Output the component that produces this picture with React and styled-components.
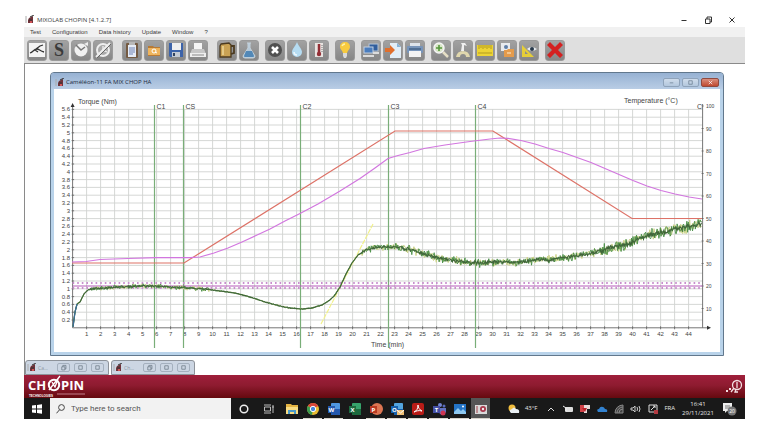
import React from "react"
import styled, { createGlobalStyle } from "styled-components"

const GlobalStyle = createGlobalStyle`
    * { box-sizing: border-box; }
    body {
        margin: 0;
        background: #fff;
        font-family: "Open Sans", "Noto Sans", sans-serif;
        color: #3c3c3c;
    }
    button, input { font: inherit; color: inherit; }
    button { border: 0; padding: 0; background: none; }
    svg { display: block; }
`;

const Screen = styled.main`
    display: flex;
    flex-direction: column;
    padding: 10px 15px 22px 24px;
`;

const TitleBar = styled.header`
    display: flex;
    align-items: center;
    justify-content: space-between;
    height: 17px;
    padding: 2px 8px 0 1px;
`;

const AppTitle = styled.h1`
    display: flex;
    align-items: center;
    gap: 2px;
    margin: 0;
    font-size: 6px;
    line-height: 10px;
    font-weight: 400;
    white-space: nowrap;
`;

const WindowControls = styled.div`
    display: flex;
    gap: 14px;
    color: #333;
`;

const MenuBar = styled.nav`
    display: flex;
    align-items: center;
    gap: 11px;
    height: 10px;
    padding-left: 6px;
    background: #f1f1f1;
    font-family: "Liberation Sans", Arial, sans-serif;
    font-size: 6px;
    line-height: 8px;
`;

const Toolbar = styled.div`
    display: flex;
    align-items: center;
    gap: 6px;
    height: 26px;
    padding-left: 3px;
    background: #dfdfdf;
`;

const ToolGroup = styled.div`
    display: flex;
    gap: 2px;
    margin-right: ${(p) => (p.$wide ? "3px" : "0")};
`;

const ToolButton = styled.button`
    display: grid;
    place-items: center;
    width: 20px;
    height: 21px;
    border: 1px solid #9a9a9a;
    border-radius: 3px;
    background: linear-gradient(#a2a2a2, #868686);
`;

const Desktop = styled.section`
    border: solid #8a8a8a;
    border-width: 1px 0 0 1px;
    padding: 8px 21px 0 25px;
`;

const ChildWindow = styled.article`
    border: 1px solid #62788d;
    border-radius: 4px 4px 0 0;
    padding: 0 3px 3px;
    background: #b9d3ea;
`;

const ChildTitleBar = styled.header`
    display: flex;
    align-items: center;
    justify-content: space-between;
    height: 16px;
    margin: 0 -3px;
    padding: 2px 4px 0 4px;
    border-radius: 3px 3px 0 0;
    background: linear-gradient(#97b2d3, #b9cde5);
`;

const ChildTitle = styled.h2`
    display: flex;
    align-items: center;
    gap: 1px;
    margin: 0;
    font-size: 6px;
    line-height: 10px;
    font-weight: 400;
    color: #1d2b3c;
`;

const ChildControls = styled.div`
    display: flex;
    gap: 2px;
`;

const ChildControl = styled.button`
    display: grid;
    place-items: center;
    width: ${(p) => (p.$danger ? "18px" : "17px")};
    height: 9px;
    border: 1px solid ${(p) => (p.$danger ? "#8f4a40" : "#8fa3ba")};
    border-radius: 2px;
    color: ${(p) => (p.$danger ? "#fff" : "#66788c")};
    background: ${(p) => (p.$danger ? "linear-gradient(#d98e7e, #c04a30)" : "linear-gradient(#cfdceb, #b3c7dd)")};
`;

const ChartArea = styled.div`
    background: #fff;
    svg { width: 100%; height: auto; }
`;

const MinimizedRow = styled.div`
    display: flex;
    gap: 2px;
    margin: 4px 0 0 -25px;
`;

const MinimizedWindow = styled.div`
    display: flex;
    align-items: center;
    gap: 4px;
    width: 84px;
    height: 15px;
    padding: 0 4px 0 1px;
    border: 1px solid #8d9299;
    border-radius: 3px 3px 0 0;
    background: #ccd6e3;
    font-size: 5px;
    line-height: 8px;
    color: #8c96a3;
`;

const MinimizedTitle = styled.span`
    display: flex;
    align-items: center;
    gap: 1px;
    flex: 1;
`;

const MinimizedControl = styled.button`
    display: grid;
    place-items: center;
    flex: none;
    width: 13px;
    height: 9px;
    border: 1px solid #a4b0be;
    border-radius: 2px;
    color: #66727f;
`;

const BrandBar = styled.section`
    display: flex;
    align-items: center;
    justify-content: space-between;
    height: 23px;
    padding: 0 2px 0 4px;
    background: linear-gradient(#9f1f3b, #8e1b30 45%, #65090f);
`;

const TaskBar = styled.footer`
    display: flex;
    align-items: stretch;
    height: 21px;
    background: #191919;
    color: #e6e6e6;
`;

const StartButton = styled.button`
    display: grid;
    place-items: center;
    width: 26px;
`;

const SearchBox = styled.label`
    display: flex;
    align-items: center;
    gap: 6px;
    width: 181px;
    padding-left: 6px;
    background: #f2f2f2;
    color: #444;
`;

const SearchInput = styled.input`
    min-width: 0;
    flex: 1;
    border: 0;
    padding: 0;
    outline: 0;
    background: transparent;
    font-family: Roboto, "Open Sans", sans-serif;
    font-size: 8px;
    line-height: 12px;
    &::placeholder { color: #555; opacity: 1; }
`;

const PinnedApps = styled.div`
    display: flex;
`;

const TaskButton = styled.button`
    display: grid;
    place-items: center;
    width: ${(p) => (p.$wide ? "25px" : "21px")};
    background: ${(p) => (p.$active ? "#555" : "transparent")};
    box-shadow: ${(p) => (p.$open ? "inset 0 -1px #d9d5cc" : "none")};
    border: solid transparent;
    border-width: 0 1px;
    background-clip: padding-box;
`;

const Tray = styled.div`
    display: flex;
    align-items: center;
    gap: 5px;
    margin-left: auto;
    padding-right: 8px;
    font-size: 6px;
    line-height: 9px;
`;

const TrayButton = styled.button`
    display: grid;
    place-items: center;
    width: 12px;
    height: 18px;
`;

const Weather = styled.button`
    display: flex;
    align-items: center;
    gap: 5px;
    margin-right: 3px;
`;

const Clock = styled.time`
    width: 36px;
    text-align: center;
`;

const NotifyButton = styled(TrayButton)`
    width: 16px;
`;

const AppGlyph = () => (
    <svg width="10" height="9" viewBox="0 0 10 9" aria-hidden="true">
        <path d="M1 1v7" stroke="#aaa" />
        <path d="M4 3l4-2v7H3V5z" fill="#70333a" />
        <path d="M5 2l4-2M4 5h3" stroke="#333" />
        <path d="M5 6h2v2H5z" fill="#d35557" />
    </svg>
);

// 計器ツールバーの絵。すべて18x18
const toolIcons = {
    curve: (
        <>
            <rect x="1" y="2" width="16" height="14" fill="#f4f4f4" />
            <path d="M2 12c3-1 4-4 7-4 2 0 3 2 7 3M8 8l4-3 3-1M7 9l3 2" fill="none" stroke="#333" strokeWidth="1.3" />
        </>
    ),
    standard: (
        <text x="9" y="15" textAnchor="middle" fontSize="18" fontWeight="700" fontFamily="Liberation Serif, serif" fill="#3b3b3b">S</text>
    ),
    clock: (
        <>
            <circle cx="9" cy="9" r="6.5" fill="#f0f0f0" />
            <path d="M4 4l5 5 4-3" fill="none" stroke="#777" strokeWidth="1.5" />
            <path d="M12 3l4-2v4z" fill="#eee" />
        </>
    ),
    clockOff: (
        <>
            <circle cx="9" cy="9" r="6" fill="#aaa" stroke="#eee" strokeWidth="2" />
            <path d="M9 5v4l4 2" fill="none" stroke="#eee" strokeWidth="1.3" />
            <path d="M2 16L16 2" stroke="#eee" strokeWidth="2" />
            <path d="M3 17L17 3" stroke="#666" />
        </>
    ),
    clipboard: (
        <>
            <rect x="3" y="2" width="12" height="15" rx="1" fill="#755b43" />
            <rect x="5" y="4" width="8" height="12" fill="#e6ecf6" />
            <rect x="6" y="1" width="6" height="3" fill="#b8b8b8" />
            <path d="M6 7h6M6 9h6M6 11h6M6 13h4" stroke="#7184b5" />
        </>
    ),
    folder: (
        <>
            <path d="M3 5h5l1 1h6v9H3z" fill="#b87a35" />
            <path d="M3 7h12v7H3z" fill="#efb45c" />
            <circle cx="9" cy="10" r="2" fill="none" stroke="#fff" />
            <path d="M10 11l2 1" stroke="#fff" />
        </>
    ),
    save: (
        <>
            <path d="M2 2h14v14H3l-1-1z" fill="#3c63a9" />
            <rect x="5" y="2" width="9" height="7" fill="#eee" />
            <rect x="5" y="11" width="8" height="5" fill="#c4cad3" />
            <path d="M6 12h2v3H6z" fill="#33435e" />
        </>
    ),
    print: (
        <>
            <path d="M5 2h8v7H5z" fill="#f5f5f5" />
            <path d="M3 8h12l2 5H1z" fill="#c7c7c7" />
            <path d="M1 12h16v4H1z" fill="#eee" />
            <path d="M3 14h12" stroke="#888" />
        </>
    ),
    jug: (
        <>
            <path d="M3 3l8-1 2 2v12H2V5z" fill="#c9a254" stroke="#4c3b21" strokeWidth="1.3" />
            <path d="M13 5h3v7l-3 1" fill="none" stroke="#4c3b21" strokeWidth="1.8" />
            <path d="M5 5v9" stroke="#e4c987" strokeWidth="2" />
        </>
    ),
    flask: (
        <>
            <path d="M7 2h4M8 2v5l-5 8q0 2 2 2h8q2 0 2-2l-5-8V2" fill="#b4c8d8" stroke="#c4d2dc" />
            <path d="M6 10h6l2 5q0 1-1 1H5q-1 0-1-1z" fill="#5288b7" />
        </>
    ),
    stop: (
        <>
            <circle cx="9" cy="9" r="7" fill="#505050" />
            <path d="M6 6l6 6M12 6l-6 6" stroke="#fff" strokeWidth="2.6" />
        </>
    ),
    drop: (
        <>
            <path d="M9 1c2 5 5 7 5 10a5 5 0 01-10 0c0-3 3-5 5-10z" fill="#b5dcf2" />
            <path d="M6 11q0 3 3 3" fill="none" stroke="#eef8fd" strokeWidth="1.5" />
        </>
    ),
    thermometer: (
        <>
            <rect x="5" y="2" width="8" height="14" fill="#e9e4e1" />
            <path d="M9 3v9" stroke="#942e35" strokeWidth="2.5" />
            <circle cx="9" cy="13" r="2.2" fill="#942e35" />
            <path d="M12 4v8" stroke="#777" strokeDasharray="1 1" />
        </>
    ),
    bulb: (
        <>
            <path d="M9 1c3 0 5 2 5 5 0 2-2 3-3 6H7C6 9 4 8 4 6c0-3 2-5 5-5z" fill="#f7ca3f" />
            <path d="M6 5q1-2 3-2" fill="none" stroke="#fff2a4" strokeWidth="1.5" />
            <path d="M7 12h4v3l-1 2H8l-1-2z" fill="#d9d9d9" />
        </>
    ),
    computers: (
        <>
            <rect x="7" y="3" width="9" height="7" fill="#315e9d" stroke="#b5c4d5" />
            <rect x="2" y="6" width="9" height="6" fill="#4a7dbe" stroke="#c3d0df" />
            <path d="M1 15h11M11 12h6" stroke="#dcdcdc" strokeWidth="2" />
        </>
    ),
    exportPage: (
        <>
            <path d="M6 2h7l4 4v11H6z" fill="#e1edf7" />
            <path d="M13 2v4h4" fill="#87b4da" />
            <path d="M1 7h5V4l5 5-5 5v-3H1z" fill="#e06f2c" />
        </>
    ),
    report: (
        <>
            <rect x="4" y="2" width="10" height="4" fill="#dde3ea" />
            <rect x="1" y="5" width="16" height="7" rx="1" fill="#7895ba" />
            <path d="M3 10h12v6H3z" fill="#f3f3f3" />
            <path d="M3 8h12" stroke="#28486c" />
        </>
    ),
    zoom: (
        <>
            <path d="M11 11l5 5" stroke="#e5dec5" strokeWidth="2.5" />
            <circle cx="7" cy="7" r="5" fill="#d9e6c8" stroke="#f5f5f5" strokeWidth="1.5" />
            <path d="M7 4v6M4 7h6" stroke="#57983d" strokeWidth="1.6" />
        </>
    ),
    torque: (
        <>
            <path d="M7 2h4l2 3-3-1v6H7l1-6z" fill="#f0f0f0" />
            <path d="M2 16q1-6 7-6t7 6z" fill="#e0d7ad" />
            <path d="M6 16q0-3 3-3t3 3" fill="#8b8b8b" />
        </>
    ),
    ruler: (
        <>
            <rect x="1" y="4" width="16" height="11" fill="#edd435" />
            <path d="M3 4v4M5 4v3M7 4v4M9 4v3M11 4v4M13 4v3M15 4v4M2 12h14" stroke="#b39b20" />
        </>
    ),
    copyFolder: (
        <>
            <rect x="3" y="2" width="9" height="8" fill="#e7eaee" />
            <circle cx="8" cy="6" r="2" fill="#5e7ea7" />
            <path d="M6 9h3l1-1h6v8H6z" fill="#e49b4b" />
            <path d="M9 12h4" stroke="#fff0d5" />
        </>
    ),
    measure: (
        <>
            <path d="M2 4v12h12z" fill="#e5ce38" />
            <path d="M5 10v3h3z" fill="#8d8d8d" />
            <path d="M7 8q4-4 10 0-5 4-10 0z" fill="#e9edf1" />
            <circle cx="12" cy="8" r="2" fill="#27384a" />
        </>
    ),
    quit: <path d="M4 1l5 5 5-5 3 3-5 5 5 5-3 3-5-5-5 5-3-3 5-5-5-5z" fill="#d42020" />,
};

const toolGroups = [
    { wide: true, tools: ["curve", "standard", "clock", "clockOff"] },
    { wide: true, tools: ["clipboard", "folder", "save", "print"] },
    { tools: ["jug", "flask"] },
    { tools: ["stop", "drop", "thermometer"] },
    { tools: ["bulb"] },
    { tools: ["computers", "exportPage", "report"] },
    { tools: ["zoom", "torque", "ruler", "copyFolder", "measure"] },
    { tools: ["quit"] },
];

const menus = ["Test", "Configuration", "Data history", "Update", "Window", "?"];

const LEFT = 72.6;
const RIGHT = 702.6;
const BOTTOM = 327.8;
const xOf = (min) => LEFT + min * 14;
const yOf = (nm) => BOTTOM - nm * 39;

const torque = [
    [73, 327], [75, 312], [77, 304], [80, 302], [84, 294], [88, 290], [95, 288.5], [110, 287.7], [128, 286.6],
    [140, 286], [155, 286], [170, 287], [190, 288], [205, 289], [220, 291], [235, 293], [250, 297], [265, 302],
    [280, 306], [290, 308], [302, 309], [312, 308], [322, 305], [330, 300], [335, 295], [340, 287], [346, 274],
    [352, 263], [358, 255], [366, 250], [375, 247.5], [388, 247], [400, 247.5], [412, 250], [424, 254], [438, 258],
    [455, 261], [470, 262.5], [480, 263], [500, 262], [521, 262], [535, 260], [549, 260], [563, 257.5], [577, 256],
    [591, 253.5], [605, 249], [619, 246], [633, 242], [645, 236], [661, 232], [675, 229], [690, 226.5], [702, 224],
];
const doughTemp = [
    [72, 262], [86, 261.5], [100, 259.5], [128, 258.5], [156, 257.7], [190, 257.7], [200, 257], [214, 253], [228, 248],
    [242, 242], [256, 235.5], [270, 229], [285, 221], [300, 213.5], [318, 204], [340, 191], [360, 178.5], [375, 168],
    [388, 158.5], [398, 155.5], [410, 152.5], [424, 148.5], [445, 145], [470, 141.5], [490, 139], [500, 138],
    [508, 138.3], [521, 140.5], [535, 144], [549, 148.5], [563, 152.5], [577, 157.5], [591, 162.5], [605, 168.5],
    [619, 174.5], [633, 180.5], [647, 186], [661, 190.5], [675, 194], [689, 197], [702, 199],
];
const setTemp = [[72, 263], [184, 263], [395, 131], [493, 131], [632, 218.5], [702, 218.5]];
const toPoints = (list) => list.map((p) => p.join(",")).join(" ");

function noiseAt(x) { //トルク波形の振れ幅
    if (x < 90) return 0.6;
    if (x < 210) return 2.2;
    if (x < 362) return 0.7;
    if (x < 400) return 3.4;
    if (x < 600) return 4.2;
    return 6;
}

function makeTrace(seed, scale) {
    const out = [];
    let s = seed;
    let k = 0;
    for (let x = 73; x <= 702; x += 0.7) {
        while (k < torque.length - 2 && torque[k + 1][0] < x) k++;
        const [x0, y0] = torque[k];
        const [x1, y1] = torque[k + 1];
        s = (s * 16807) % 2147483647;
        const a = s / 2147483647;
        s = (s * 16807) % 2147483647;
        const r = a + s / 2147483647 - 1;
        const y = y0 + ((y1 - y0) * (x - x0)) / (x1 - x0) + r * noiseAt(x) * scale;
        out.push([x.toFixed(1), y.toFixed(1)]);
    }
    return toPoints(out);
}

const yellowTrace = makeTrace(901, 1.2);
const greenTrace = makeTrace(77, 1.2);
const darkTrace = makeTrace(4321, 0.5);

const markers = [[154.5, "C1"], [183.5, "CS"], [300.5, "C2"], [388.5, "C3"], [475.5, "C4"]];

function Chart() {
    const minutes = Array.from({ length: 44 }, (_, i) => i + 1);
    const torqueTicks = Array.from({ length: 28 }, (_, i) => (i + 1) / 5);
    const tempTicks = Array.from({ length: 10 }, (_, i) => (i + 1) * 10);
    return (
        <svg viewBox="54 89 666 263" fontFamily="Liberation Sans, Arial, sans-serif" fontSize="6" fill="#444" role="img" aria-label="Torque and temperature over time">
            <g stroke="#d0d2d0" strokeWidth="0.9" fill="none">
                {minutes.map((m) => <path key={m} d={`M${xOf(m)} 109V${BOTTOM}`} />)}
                {torqueTicks.map((t) => <path key={t} d={`M${LEFT} ${yOf(t)}H${RIGHT}`} />)}
            </g>
            <g stroke="#666" strokeWidth="0.9" fill="none">
                <path d={`M${LEFT} 106V${BOTTOM}H708M${RIGHT} 104V${BOTTOM}`} />
                {minutes.map((m) => <path key={m} d={`M${xOf(m)} ${BOTTOM - 1.5}v3`} />)}
                {torqueTicks.map((t) => <path key={t} d={`M${LEFT - 1} ${yOf(t)}h2.5`} />)}
                {tempTicks.map((t) => <path key={t} d={`M${RIGHT - 1} ${331 - t * 2.25}h2`} />)}
            </g>
            <path d="M72.6 103l-2 4h4zM711 327.8l-4-2v4z" fill="#333" />
            <g textAnchor="end">
                {torqueTicks.map((t) => <text key={t} x="70" y={yOf(t) + 2}>{t}</text>)}
            </g>
            <g textAnchor="middle">
                {minutes.map((m) => <text key={m} x={xOf(m)} y="336">{m}</text>)}
            </g>
            {tempTicks.map((t) => <text key={t} x="706" y={333 - t * 2.25} fontSize="5">{t}</text>)}
            <g fontSize="7">
                <text x="78" y="104">Torque (Nm)</text>
                <text x="624" y="103">Temperature (°C)</text>
                <text x="371" y="347">Time (min)</text>
                {markers.map(([x, name]) => <text key={name} x={x + 2} y="109">{name}</text>)}
                <text x="697" y="109">C</text>
            </g>
            <g stroke="#79ae78" strokeWidth="1.2">
                {markers.map(([x, name]) => <path key={name} d={`M${x} 105V348`} />)}
            </g>
            <g fill="none">
                <path d={`M${LEFT} 286H${RIGHT}`} stroke="#b65fb9" strokeWidth="1.2" />
                <path d={`M${LEFT} 283H${RIGHT}M${LEFT} 288H${RIGHT}`} stroke="#c88ecd" strokeWidth="2" strokeDasharray="1.6 3" />
                <path d="M321 324L373 224" stroke="#f1f18a" strokeWidth="1.2" strokeDasharray="5 1" />
                <polyline points={toPoints(setTemp)} stroke="#dd7267" strokeWidth="1.2" />
                <polyline points={toPoints(doughTemp)} stroke="#d276df" strokeWidth="1.2" />
                <polyline points={yellowTrace} stroke="#cdd48a" strokeWidth="1" />
                <polyline points={greenTrace} stroke="#4a8f45" strokeWidth="0.9" />
                <polyline points={darkTrace} stroke="#41663a" strokeWidth="1.1" />
                <path d="M73 327l2-15 2-8" stroke="#3d6d98" strokeWidth="1.3" />
            </g>
        </svg>
    );
}

const Glyph = ({ kind, size = 10 }) => (
    <svg width={size} height={size} viewBox="0 0 10 10" fill="none" stroke="currentColor" aria-hidden="true">
        {kind === "minimize" && <path d="M2.5 5.5h5" />}
        {kind === "restore" && <path d="M2.5 4h4.5v4.5H2.5zM4 4V2h4.5v5H7" />}
        {kind === "maximize" && <path d="M2.5 2.5h5v5h-5z" />}
        {kind === "close" && <path d="M2.5 2.5l5 5M7.5 2.5l-5 5" />}
    </svg>
);

const office = (letter, color, light) => (
    <>
        <rect x="4" y="1" width="9" height="12" rx="1" fill={light} />
        <path d="M4 7h9v5q0 1-1 1H4z" fill={color} />
        <rect x="1" y="4" width="7" height="7" fill={color} />
        <text x="4.5" y="10" textAnchor="middle" fontSize="6" fontWeight="700" fill="#fff">{letter}</text>
    </>
);

const taskApps = [
    { name: "Cortana", wide: true, art: <circle cx="7" cy="7" r="3.8" fill="none" stroke="#eee" strokeWidth="1.5" /> },
    { name: "Task view", wide: true, art: <path d="M2 3h7M2 11h7M2.5 5h6v4h-6zM11 3v8M10 5h2" fill="none" stroke="#bbb" /> },
    { name: "File Explorer", art: (
        <>
            <path d="M1 2h5l1 1h6v9H1z" fill="#e4b342" />
            <path d="M1 5h12v7H1z" fill="#f9dd83" />
            <path d="M3 8h8v4H9v-2H5v2H3z" fill="#4b9ac8" />
        </>
    ) },
    { name: "Chrome", open: true, art: (
        <>
            <circle cx="7" cy="7" r="6" fill="#e9bd33" />
            <path d="M7 7L1.8 4a6 6 0 0110.4 0z" fill="#d9463b" />
            <path d="M7 7L1.8 4A6 6 0 006 13z" fill="#3c9b50" />
            <circle cx="7" cy="7" r="2.7" fill="#4a87da" stroke="#fff" />
        </>
    ) },
    { name: "Word", open: true, art: office("W", "#2459ad", "#4f97e0") },
    { name: "Excel", art: office("X", "#1d6a3f", "#36a36b") },
    { name: "PowerPoint", open: true, art: (
        <>
            <circle cx="8" cy="7" r="6" fill="#dc7552" />
            <rect x="1" y="4" width="7" height="7" fill="#b83a22" />
            <text x="4.5" y="10" textAnchor="middle" fontSize="6" fontWeight="700" fill="#fff">P</text>
        </>
    ) },
    { name: "Outlook", open: true, art: (
        <>
            {office("O", "#1761ac", "#53a5df")}
            <path d="M7 8h7v5H7z" fill="#f0c177" />
            <path d="M7 8l3.5 3L14 8" fill="none" stroke="#fff" />
        </>
    ) },
    { name: "Acrobat", open: true, art: (
        <>
            <rect x="1" y="1" width="12" height="12" rx="2" fill="#b91c17" />
            <path d="M3 10c3-1 4-4 4-7 0 3 2 5 4 6-3-1-6 0-8 1z" fill="none" stroke="#fff" />
        </>
    ) },
    { name: "Teams", open: true, art: (
        <>
            <circle cx="8" cy="3" r="2" fill="#7483d1" />
            <circle cx="12" cy="4" r="1.5" fill="#596bbb" />
            <path d="M5 6h9v4q-2 4-6 2z" fill="#6372c1" />
            <rect x="1" y="4" width="7" height="7" fill="#454fa3" />
            <text x="4.5" y="10" textAnchor="middle" fontSize="6" fontWeight="700" fill="#fff">T</text>
            <circle cx="11" cy="11" r="2.5" fill="#cf3551" />
        </>
    ) },
    { name: "Photos", open: true, art: (
        <>
            <rect x="1" y="2" width="12" height="10" fill="#2474c6" />
            <path d="M1 10l4-4 3 3 2-2 3 3v2H1z" fill="#8fc9f0" />
            <circle cx="10" cy="4.5" r="1" fill="#fff" />
        </>
    ) },
    { name: "Mixolab", active: true, open: true, art: (
        <>
            <rect x="1" y="3" width="12" height="9" fill="#d9d9d9" />
            <path d="M3 4v7" stroke="#a1434a" />
            <circle cx="9" cy="7" r="3" fill="#a9384b" />
            <circle cx="9" cy="7" r="1.2" fill="#eee" />
        </>
    ) },
];

const trayIcons = [
    { name: "Show hidden icons", art: <path d="M3 8l3-3 3 3" fill="none" stroke="#ddd" /> },
    { name: "Battery", art: <><rect x="3" y="4" width="8" height="5" rx="1" fill="#ddd" /><path d="M1 3l3 2v3" fill="none" stroke="#eee" /></> },
    { name: "Security", art: <><path d="M1 2h5v7H1z" fill="#d24248" /><path d="M5 2h6v4H8v4H5z" fill="#e9dada" /><path d="M3 5h5l-2 4z" fill="#b92229" /></> },
    { name: "OneDrive", art: <path d="M2 9q-2-3 1-3 1-3 4-2 1 0 2 2 3 0 2 3z" fill="#3282d0" /> },
    { name: "Network", art: <path d="M2 10A8 8 0 0110 2v8zM4 10A6 6 0 0110 4M6 10a4 4 0 014-4" fill="#444" stroke="#888" /> },
    { name: "Volume", art: <path d="M1 5h2l2-2v6L3 7H1zM7 4q1 2 0 4M9 3q2 3 0 6" fill="none" stroke="#ccc" /> },
    { name: "Input", art: <><path d="M2 2h8v7H2zM4 7l4-4M6 3h2v2" fill="none" stroke="#ddd" /><path d="M7 7h4v4H7z" fill="#b43b42" /></> },
];

export default function App() {
    return (
        <Screen>
            <GlobalStyle />
            <TitleBar>
                <AppTitle><AppGlyph />MIXOLAB CHOPIN [4.1.2.7]</AppTitle>
                <WindowControls>
                    {["minimize", "restore", "close"].map((kind) => (
                        <button key={kind} aria-label={kind}><Glyph kind={kind} /></button>
                    ))}
                </WindowControls>
            </TitleBar>
            <MenuBar>
                {menus.map((m) => <button key={m}>{m}</button>)}
            </MenuBar>
            <Toolbar>
                {toolGroups.map((group, i) => (
                    <ToolGroup key={i} $wide={group.wide}>
                        {group.tools.map((tool) => (
                            <ToolButton key={tool} aria-label={tool}>
                                <svg width="18" height="18" viewBox="0 0 18 18">{toolIcons[tool]}</svg>
                            </ToolButton>
                        ))}
                    </ToolGroup>
                ))}
            </Toolbar>

            <Desktop>
                <ChildWindow>
                    <ChildTitleBar>
                        <ChildTitle><AppGlyph />Caméléon-11 FA MIX CHOP HA</ChildTitle>
                        <ChildControls>
                            <ChildControl aria-label="Minimize"><Glyph kind="minimize" size={7} /></ChildControl>
                            <ChildControl aria-label="Maximize"><Glyph kind="maximize" size={7} /></ChildControl>
                            <ChildControl aria-label="Close" $danger><Glyph kind="close" size={7} /></ChildControl>
                        </ChildControls>
                    </ChildTitleBar>
                    <ChartArea><Chart /></ChartArea>
                </ChildWindow>
                <MinimizedRow>
                    {["Ca...", "Ch..."].map((name) => (
                        <MinimizedWindow key={name}>
                            <MinimizedTitle><AppGlyph />{name}</MinimizedTitle>
                            {["restore", "maximize", "close"].map((kind) => (
                                <MinimizedControl key={kind} aria-label={kind}>
                                    <Glyph kind={kind === "close" ? "maximize" : kind} size={7} />
                                </MinimizedControl>
                            ))}
                        </MinimizedWindow>
                    ))}
                </MinimizedRow>
            </Desktop>

            <BrandBar>
                <svg width="60" height="23" viewBox="0 0 60 23" fill="#fff" fontFamily="Open Sans, sans-serif">
                    <g fontSize="13" fontWeight="700">
                        <text x="0" y="15">CH</text>
                        <text x="33" y="15">PIN</text>
                    </g>
                    <circle cx="26" cy="10" r="5.2" fill="none" stroke="#fff" strokeWidth="2" />
                    <path d="M21 15L32 1M24 7l3 5 3-8" fill="none" stroke="#fff" strokeWidth="1.3" />
                    <text x="1" y="22" fontSize="3" fontWeight="700" fontFamily="Liberation Sans, sans-serif">TECHNOLOGIES</text>
                    <path d="M29 19h28" stroke="#d79ba4" strokeWidth="0.8" />
                </svg>
                <svg width="18" height="16" viewBox="0 0 18 16" fill="none" stroke="#f3dfe2" role="img" aria-label="Connection">
                    <circle cx="12" cy="6" r="4.5" strokeWidth="1.3" />
                    <path d="M12 3v6M9 9l-3 4M11 10l-1 3h3" strokeWidth="1.3" />
                    <path d="M1 12h2M4 10h2" strokeWidth="2" />
                </svg>
            </BrandBar>

            <TaskBar>
                <StartButton aria-label="Start">
                    <svg width="10" height="10" viewBox="0 0 10 10" fill="#fff"><path d="M0 1.5l4-.5v3.6H0zM5 1l5-.8v4.4H5zM0 5.5h4V9l-4-.5zM5 5.5h5v4.3L5 9z" /></svg>
                </StartButton>
                <SearchBox>
                    <svg width="9" height="10" viewBox="0 0 9 10" fill="none" stroke="#444" aria-hidden="true">
                        <circle cx="5.5" cy="3.5" r="2.9" />
                        <path d="M3.5 5.8L.5 9.3" />
                    </svg>
                    <SearchInput type="text" placeholder="Type here to search" aria-label="Search" />
                </SearchBox>
                <PinnedApps>
                    {taskApps.map((app) => (
                        <TaskButton key={app.name} aria-label={app.name} $wide={app.wide} $open={app.open} $active={app.active}>
                            <svg width="14" height="14" viewBox="0 0 14 14">{app.art}</svg>
                        </TaskButton>
                    ))}
                </PinnedApps>
                <Tray>
                    <Weather>
                        <svg width="12" height="10" viewBox="0 0 12 10" aria-hidden="true">
                            <circle cx="4" cy="4" r="3.5" fill="#f0bd3e" />
                            <path d="M3 9q-3-3 1-4 2-3 4 0 4 0 3 4z" fill="#e9eff3" />
                        </svg>
                        43°F
                    </Weather>
                    {trayIcons.map((icon) => (
                        <TrayButton key={icon.name} aria-label={icon.name}>
                            <svg width="12" height="12" viewBox="0 0 12 12">{icon.art}</svg>
                        </TrayButton>
                    ))}
                    <button>FRA</button>
                    <Clock>16:41<br />29/11/2021</Clock>
                    <NotifyButton aria-label="Notifications">
                        <svg width="16" height="14" viewBox="0 0 16 14">
                            <path d="M2 1h9v8H6l-2 2V9H2z" fill="#eee" />
                            <path d="M4 4h5M4 6h5" stroke="#777" />
                            <circle cx="11" cy="9" r="4.5" fill="#777" />
                            <text x="11" y="11" textAnchor="middle" fontSize="5" fill="#fff">20</text>
                        </svg>
                    </NotifyButton>
                </Tray>
            </TaskBar>
        </Screen>
    );
}
